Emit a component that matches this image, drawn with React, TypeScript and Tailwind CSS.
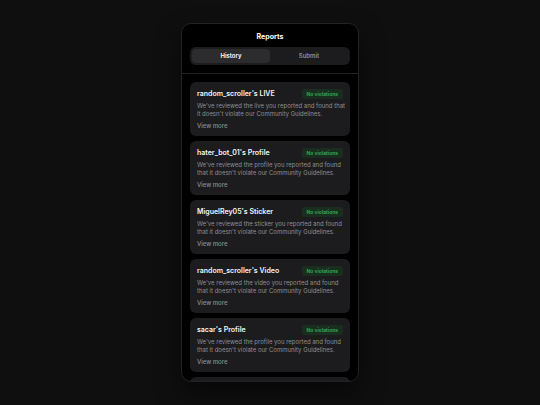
import React, { useState } from 'react';
import { clsx } from 'clsx';

type Tab = 'history' | 'submit';

interface Report {
  id: number;
  owner: string;
  kind: 'LIVE' | 'Profile' | 'Sticker' | 'Video';
}

const TABS: { id: Tab; label: string }[] = [
  { id: 'history', label: 'History' },
  { id: 'submit', label: 'Submit' },
];

const REPORTS: Report[] = [
  { id: 1, owner: 'random_scroller', kind: 'LIVE' },
  { id: 2, owner: 'hater_bot_01', kind: 'Profile' },
  { id: 3, owner: 'MiguelRey05', kind: 'Sticker' },
  { id: 4, owner: 'random_scroller', kind: 'Video' },
  { id: 5, owner: 'sacar', kind: 'Profile' },
];

const ReportCard: React.FC<{ report: Report }> = ({ report }) => {
  const title = `${report.owner}'s ${report.kind}`;
  const summary = `We've reviewed the ${report.kind.toLowerCase()} you reported and found that it doesn't violate our Community Guidelines.`;

  return (
    <li className="shrink-0 rounded-md bg-[#1c1c1e] px-[7px] py-1.5">
      <div className="flex items-center justify-between">
        <h2 className="text-[7px] leading-[11px] font-semibold text-[#f5f5f5]">{title}</h2>
        <span className="rounded-xs bg-[#1a2e20] px-[5px] text-[5px] leading-[10px] font-semibold text-[#32b058]">
          No violations
        </span>
      </div>
      <p className="-mr-1 mt-[3px] text-[6px] leading-[8px] text-[#8e8e93]">{summary}</p>
      <button type="button" className="mt-1 block text-[6px] leading-[8px] font-medium text-[#8e8e93]">
        View more
      </button>
    </li>
  );
};

export default function App() {
  const [tab, setTab] = useState<Tab>('history');

  return (
    <main className="flex h-screen justify-center bg-[#0f0f0f] py-[23px] font-['Inter',sans-serif]">
      <section className="flex w-full max-w-[178px] flex-col overflow-hidden rounded-[10px] border border-[#232325] bg-black shadow-[0_12px_24px_rgba(0,0,0,0.5)]">
        <header className="border-b border-[#232325] px-2 py-2">
          <h1 className="text-center text-[7px] leading-[9px] font-bold text-white">Reports</h1>
          <div role="tablist" className="mt-1.5 flex h-[18px] rounded-md bg-[#1c1c1e] p-0.5">
            {TABS.map((t) => (
              <button
                key={t.id}
                type="button"
                role="tab"
                aria-selected={tab === t.id}
                onClick={() => setTab(t.id)}
                className={clsx(
                  'flex-1 rounded-sm text-[6px] leading-[8px] font-semibold',
                  tab === t.id ? 'bg-[#2c2c2e] text-white' : 'text-[#8e8e93]',
                )}
              >
                {t.label}
              </button>
            ))}
          </div>
        </header>

        {tab === 'history' && (
          <ul className="flex min-h-0 flex-1 flex-col gap-[5px] overflow-y-auto px-2 py-2 [scrollbar-width:none]">
            {REPORTS.map((r) => (
              <ReportCard key={r.id} report={r} />
            ))}
            {/* next page placeholder */}
            <li className="h-[54px] shrink-0 rounded-md bg-[#1c1c1e]" />
          </ul>
        )}
      </section>
    </main>
  );
}
